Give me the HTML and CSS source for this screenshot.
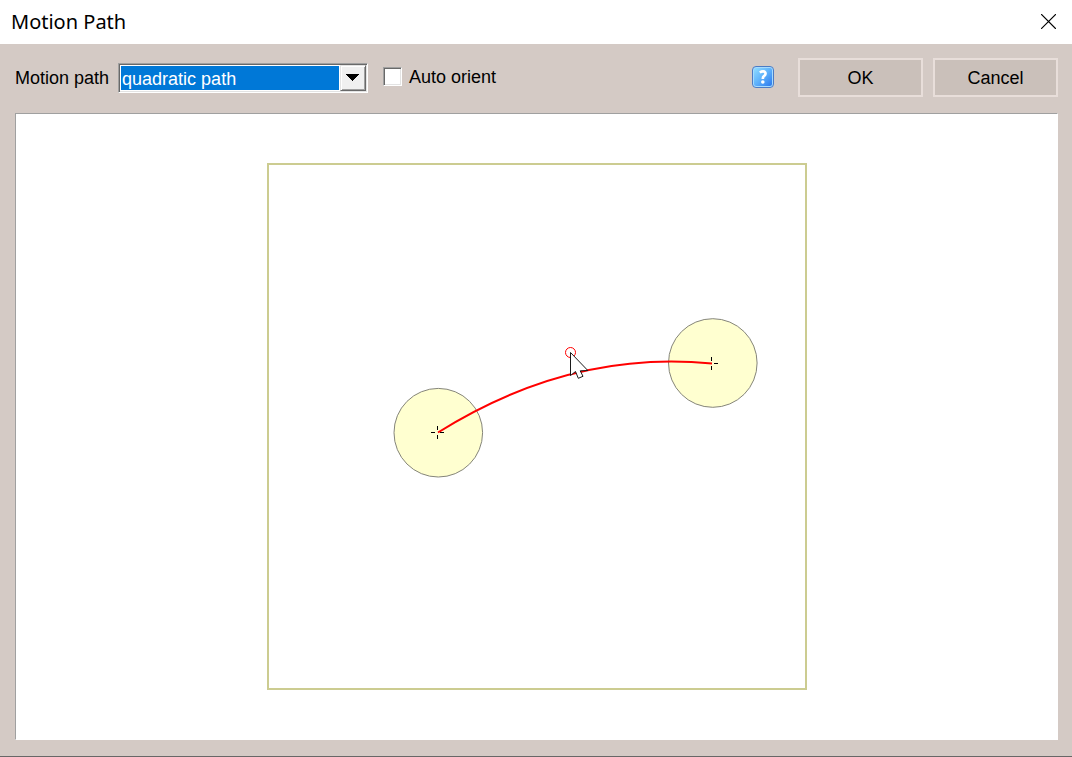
FILE: index.html
```html
<!DOCTYPE html>
<html lang="en">
<head>
<meta charset="utf-8">
<title>Motion Path</title>
<link rel="stylesheet" href="styles.css">
</head>
<body>
<div class="dialog">
  <header class="titlebar">
    <h1 class="title">Motion Path</h1>
    <button class="close" type="button" aria-label="Close">
      <svg width="15" height="15" viewBox="0 0 15 15" aria-hidden="true"><path d="M0.5 0.5L14.5 14.5M14.5 0.5L0.5 14.5" stroke="#000" stroke-width="1.1" stroke-linecap="square"/></svg>
    </button>
  </header>
  <main class="body">
    <div class="toolbar">
      <label class="label" for="path-type">Motion path</label>
      <div class="combo">
        <select class="combo-select" id="path-type">
          <option>quadratic path</option>
        </select>
        <span class="combo-arrow" aria-hidden="true">
          <svg width="13" height="7" viewBox="0 0 13 7" shape-rendering="crispEdges"><path d="M0 0H13L6.5 7Z" fill="#000"/></svg>
        </span>
      </div>
      <div class="check-group">
        <input class="check" type="checkbox" id="auto-orient">
        <label class="label" for="auto-orient">Auto orient</label>
      </div>
      <button class="help" type="button" aria-label="Help">
        <svg width="22" height="22" viewBox="0 0 22 22" aria-hidden="true">
          <defs>
            <linearGradient id="help-fill" x1="0" y1="0" x2="1" y2="1">
              <stop offset="0" stop-color="#8fdcff"/>
              <stop offset="0.5" stop-color="#5eb1fb"/>
              <stop offset="1" stop-color="#2a78ee"/>
            </linearGradient>
          </defs>
          <rect x="0.5" y="0.5" width="21" height="21" rx="3.5" fill="#a6dbff" stroke="#4b7bc4"/>
          <rect x="2" y="2" width="18" height="18" rx="2" fill="url(#help-fill)"/>
          <path d="M7.8 6.5Q9.6 5.3 11.2 5.4Q13.7 5.6 13.5 7.8Q13.4 9.1 11.9 10.2Q10.8 11 10.8 12.9" fill="none" stroke="#fff" stroke-width="2.7"/>
          <circle cx="10.8" cy="16" r="1.8" fill="#fff"/>
        </svg>
      </button>
      <button class="button" type="button">OK</button>
      <button class="button" type="button">Cancel</button>
    </div>
    <section class="canvas" aria-label="Path editor">
      <svg width="540" height="527" viewBox="267 163 540 527">
        <rect x="268" y="164" width="538" height="525" fill="#fff" stroke="#cccc91" stroke-width="2"/>
        <g fill="#ffffd0" stroke="#85857a">
          <circle cx="438.3" cy="432.7" r="44.3"/>
          <circle cx="712.8" cy="363" r="44.3"/>
        </g>
        <g stroke="#000" shape-rendering="crispEdges">
          <path d="M431 432.5H435M440 432.5H444M437.5 426V430M437.5 435V439"/>
          <path d="M705 363.5H709M714 363.5H718M711.5 357V361M711.5 366V370"/>
        </g>
        <path d="M438 432.5Q570.5 349.5 712 363.6" fill="none" stroke="#f00" stroke-width="2"/>
        <circle cx="570.5" cy="352.5" r="5" fill="#fff" stroke="#f00"/>
        <path d="M570.5 352.5V375.5L575.5 371.5L578.3 378.3L583 376.3L580.2 370.8L587.8 370.5Z" fill="#fff" stroke="#000" stroke-width="0.9"/>
      </svg>
    </section>
  </main>
</div>
</body>
</html>
```
FILE: styles.css
```css
* {
  box-sizing: border-box;
}

body {
  margin: 0;
  font-family: "Liberation Sans", Arial, sans-serif;
  font-size: 18px;
  line-height: 20px;
  color: #000;
}

button {
  font: inherit;
  color: inherit;
}

.dialog {
  display: flex;
  flex-direction: column;
  min-height: 100vh;
  background: #d4cac5;
  border-bottom: 1px solid #676767;
}

.titlebar {
  display: flex;
  align-items: center;
  justify-content: space-between;
  height: 44px;
  padding: 0 16px 1px 11px;
  background: #fff;
}

.title {
  margin: 0;
  font-family: "Noto Sans", "Open Sans", sans-serif;
  font-size: 20px;
  line-height: 28px;
  font-weight: 400;
}

.close,
.help {
  display: flex;
  padding: 0;
  border: 0;
  background: none;
}

.body {
  display: flex;
  flex: 1;
  flex-direction: column;
  gap: 16px;
  padding: 14px 14px 16px 15px;
}

.toolbar {
  display: flex;
  align-items: center;
}

.combo {
  display: flex;
  width: 250px;
  height: 30px;
  margin: 0 15px 0 9px;
  background: #fff;
  border: 1px solid;
  border-color: #a0a0a0 #fff #fff #a0a0a0;
  box-shadow: inset 1px 1px #696969, inset -1px -1px #e3e3e3;
  padding: 1px;
}

.combo-select {
  flex: 1;
  min-width: 0;
  margin: 1px;
  padding: 2px 0 0 1px;
  border: 0;
  border-radius: 0;
  appearance: none;
  background: #0078d7;
  color: #fff;
  font: inherit;
}

.combo-arrow {
  display: flex;
  align-items: center;
  justify-content: center;
  width: 26px;
  padding-right: 2px;
  background: #f0f0f0;
  border: 1px solid;
  border-color: #e3e3e3 #696969 #696969 #e3e3e3;
  box-shadow: inset 1px 1px #fff, inset -1px -1px #a0a0a0;
  pointer-events: none;
}

.check-group {
  display: flex;
  align-items: center;
  gap: 7px;
  margin-right: auto;
  padding-bottom: 2px;
}

.check {
  width: 19px;
  height: 19px;
  margin: 0;
  appearance: none;
  background: #fff;
  border: 1px solid;
  border-color: #a0a0a0 #fff #fff #a0a0a0;
  box-shadow: inset 1px 1px #696969, inset -1px -1px #e3e3e3;
}

.check:checked {
  background: #0078d7;
}

.help {
  margin-right: 14px;
  padding-bottom: 1px;
}

.button {
  width: 125px;
  height: 39px;
  margin-left: 10px;
  padding: 0;
  background: #cac0ba;
  border: 2px solid #e8deda;
}

.canvas {
  display: flex;
  flex: 1;
  align-items: center;
  justify-content: center;
  background: #fff;
  border: 1px solid;
  border-color: #a0a0a0 #fff #fff #a0a0a0;
}
```
